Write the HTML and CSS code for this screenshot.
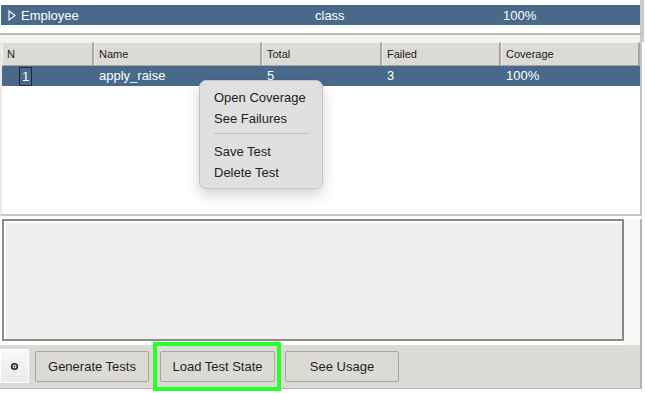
FILE: index.html
```html
<!DOCTYPE html>
<html lang="en">
<head>
    <meta charset="utf-8" />
    <link rel="stylesheet" href="styles.css">
    <title>Test Runner</title>
</head>
<body>
    <div class="window">
        <div class="tree">
            <div class="tree-row">
                <span class="tree-name">
                    <svg class="arrow" width="8" height="11" viewBox="0 0 8 11">
                        <polygon points="1,1 7,5.5 1,10" fill="none" stroke="#ffffff" stroke-width="1.1"/>
                    </svg>Employee</span>
                <span class="tree-kind">class</span>
                <span class="tree-cov">100%</span>
            </div>
        </div>
        <div class="sash"></div>

        <div class="tests">
            <div class="thead">
                <div class="th c-n">N</div>
                <div class="th c-name">Name</div>
                <div class="th c-total">Total</div>
                <div class="th c-failed">Failed</div>
                <div class="th c-cov">Coverage</div>
            </div>
            <div class="trow selected">
                <div class="td c-n"><span class="focus">1</span></div>
                <div class="td c-name">apply_raise</div>
                <div class="td c-total">5</div>
                <div class="td c-failed">3</div>
                <div class="td c-cov">100%</div>
            </div>

            <div class="menu">
                <div class="menu-item">Open Coverage</div>
                <div class="menu-item">See Failures</div>
                <div class="menu-sep"></div>
                <div class="menu-item">Save Test</div>
                <div class="menu-item">Delete Test</div>
            </div>
        </div>

        <div class="output">
            <div class="textbox"></div>
            <div class="vscroll"></div>
        </div>

        <div class="toolbar">
            <button class="gear">
                <svg width="9" height="9" viewBox="0 0 9 9">
                    <circle cx="4.5" cy="4.5" r="2.8" fill="none" stroke="#222" stroke-width="1.6"/>
                    <circle cx="4.5" cy="4.5" r="0.9" fill="#222"/>
                </svg>
            </button>
            <button class="btn">Generate Tests</button>
            <div class="highlight">
                <button class="btn">Load Test State</button>
            </div>
            <button class="btn usage">See Usage</button>
        </div>
    </div>
</body>
</html>
```

FILE: styles.css
```css
body {
    margin: 0;
    background-color: #ffffff;
    font-family: 'Liberation Sans', Arial, sans-serif;
    color: #222222;
}

.window {
    width: 645px;
    height: 393px;
    display: flex;
    flex-direction: column;
    overflow: hidden;
}

.window > div {
    flex-shrink: 0;
}

/* class tree at the top */
.tree {
    height: 33px;
    padding-top: 5px;
    box-sizing: border-box;
    margin-right: 1px;
    border-right: 4px solid #cfcac2;
}

.tree-row {
    height: 20px;
    margin-left: 1px;
    background-color: #48698a;
    color: #ffffff;
    font-size: 13px;
    display: flex;
    align-items: center;
}

.arrow {
    margin: 0 5px 0 7px;
    vertical-align: -1px;
}

.tree-name {
    width: 314px;
}

.tree-kind {
    width: 188px;
}

.sash {
    height: 7px;
    border-top: 2px solid #bdb8b0;
    background-color: #f3f2ef;
    margin-right: 1px;
    border-right: 4px solid #cfcac2;
}

/* test table */
.tests {
    position: relative;
    height: 172px;
    margin-right: 3px;
    border-left: 2px solid #ece9e4;
    border-right: 2px solid #c9c3ba;
    border-bottom: 2px solid #cfc7bb;
}

.thead {
    display: flex;
    height: 24px;
    background-color: #dcdad5;
}

.th {
    box-sizing: border-box;
    border-top: 1px solid #f2f1ee;
    border-left: 1px solid #f2f1ee;
    border-right: 2px solid #aaa59d;
    border-bottom: 1px solid #aaa59d;
    font-size: 11px;
    padding-left: 4px;
    line-height: 22px;
}

.c-n {
    width: 92px;
}

.c-name {
    width: 168px;
}

.c-total {
    width: 120px;
}

.c-failed {
    width: 119px;
}

.c-cov {
    flex: 1;
}

.trow {
    display: flex;
    height: 20px;
    font-size: 13px;
    line-height: 20px;
}

.trow.selected {
    background-color: #48698a;
    color: #ffffff;
}

.td {
    box-sizing: border-box;
    padding-left: 5px;
}

.td.c-n {
    padding-left: 17px;
}

.focus {
    display: inline-block;
    height: 17px;
    line-height: 17px;
    padding: 0 2px;
    border: 1px solid #1b2a3a;
    margin-top: 1px;
    vertical-align: top;
}

/* context menu over the table */
.menu {
    position: absolute;
    left: 197px;
    top: 38px;
    width: 122px;
    padding: 6px 0 5px 0;
    background-color: #e0e0e0;
    border: 1px solid #c4c4c4;
    border-radius: 7px;
    box-shadow: 0 6px 14px rgba(0, 0, 0, 0.18);
    font-size: 13px;
    color: #222222;
}

.menu-item {
    height: 21px;
    line-height: 21px;
    padding-left: 14px;
}

.menu-sep {
    height: 1px;
    background-color: #c2c2c2;
    margin: 4px 13px 7px 14px;
}

/* output text area */
.output {
    display: flex;
    height: 129px;
    padding-top: 3px;
    box-sizing: border-box;
}

.textbox {
    width: 622px;
    height: 122px;
    margin-left: 2px;
    box-sizing: border-box;
    border: 2px solid #8a8a8a;
    background-color: #efefef;
    box-shadow: inset 2px 2px 0 #ffffff;
}

.vscroll {
    width: 16px;
    background-color: #f8f8f8;
    border-right: 2px solid #b7b2aa;
}

/* bottom buttons */
.toolbar {
    height: 44px;
    min-height: 0;
    display: flex;
    align-items: flex-start;
    gap: 6px;
    background-color: #dcdad5;
    border-bottom: 1px solid #b8b3ab;
    border-right: 2px solid #b7b2aa;
    padding-top: 4px;
    box-sizing: border-box;
    margin-right: 3px;
    margin-bottom: 4px;
}

button {
    font-family: 'Liberation Sans', Arial, sans-serif;
    font-size: 13px;
    color: #1f1f1f;
    cursor: pointer;
}

.gear {
    width: 29px;
    height: 34px;
    padding: 0;
    border: 1px solid #ffffff;
    background: linear-gradient(#f8f8f8, #ebebeb);
    display: flex;
    align-items: center;
    justify-content: center;
}

.btn {
    width: 114px;
    height: 31px;
    margin-top: 2px;
    background-color: #dcdad5;
    border: 1px solid #a9a59f;
    border-radius: 2px;
}

.highlight {
    margin-top: -7px;
    margin-left: -2px;
    border: 4px solid #27ff2b;
    padding: 5px 2px 5px 3px;
    display: flex;
}

.highlight .btn {
    margin-top: 0;
    width: 115px;
}

.usage {
    margin-left: -2px;
}
```
